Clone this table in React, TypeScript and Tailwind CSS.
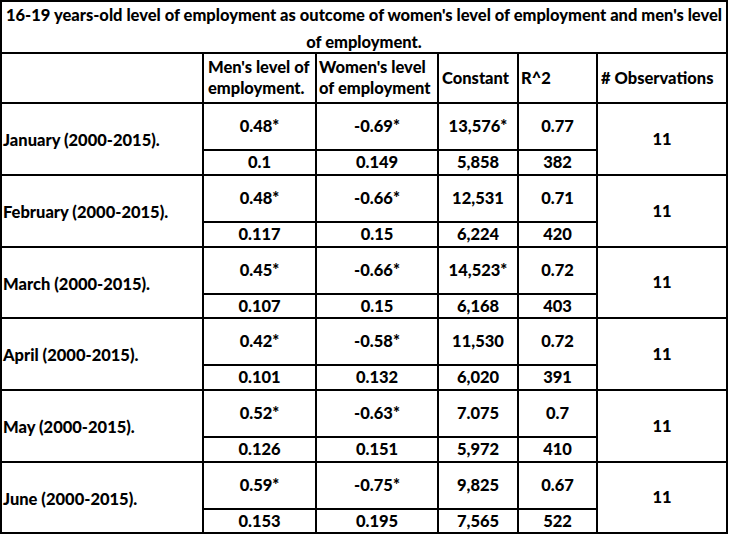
import React from "react";

type Block = { label: string; top: string[]; bottom: string[] };

const blocks: Block[] = [
  { label: "January (2000-2015).", top: ["0.48*", "-0.69*", "13,576*", "0.77"], bottom: ["0.1", "0.149", "5,858", "382"] },
  { label: "February (2000-2015).", top: ["0.48*", "-0.66*", "12,531", "0.71"], bottom: ["0.117", "0.15", "6,224", "420"] },
  { label: "March (2000-2015).", top: ["0.45*", "-0.66*", "14,523*", "0.72"], bottom: ["0.107", "0.15", "6,168", "403"] },
  { label: "April (2000-2015).", top: ["0.42*", "-0.58*", "11,530", "0.72"], bottom: ["0.101", "0.132", "6,020", "391"] },
  { label: "May (2000-2015).", top: ["0.52*", "-0.63*", "7.075", "0.7"], bottom: ["0.126", "0.151", "5,972", "410"] },
  { label: "June (2000-2015).", top: ["0.59*", "-0.75*", "9,825", "0.67"], bottom: ["0.153", "0.195", "7,565", "522"] },
];

const cell = "border-r-2 border-b-2 border-black";

export default function App() {
  return (
    <div className="min-h-[536px] w-[729px] bg-white text-black" style={{ fontFamily: "Lato, 'Liberation Sans', sans-serif" }}>
      <div className="grid w-[728px] grid-cols-[202px_113px_122px_80px_79px_130px] grid-rows-[52px_50px_47px_25px_47px_25px_47px_24px_47px_25px_47px_25px_47px_24px] border-t-2 border-l-2 border-black text-[16.5px] font-black">
        <div className={`${cell} col-span-6 flex flex-col items-center`}>
          <div className="h-[27px] leading-[27px] whitespace-nowrap">16-19 years-old level of employment as outcome of women's level of employment and men's level</div>
          <div className="h-[26px] leading-[26px] whitespace-nowrap">of employment.</div>
        </div>
        <div className={cell}></div>
        <div className={`${cell} flex flex-col justify-center pl-[4px] leading-[21px] whitespace-nowrap`}>
          <div>Men's level of</div>
          <div>employment.</div>
        </div>
        <div className={`${cell} flex flex-col justify-center pl-[2px] leading-[21px] whitespace-nowrap`}>
          <div>Women's level</div>
          <div>of employment</div>
        </div>
        <div className={`${cell} flex items-center pl-[3px]`}>Constant</div>
        <div className={`${cell} flex items-center pl-[2px]`}>R^2</div>
        <div className={`${cell} flex items-center pl-[3px] whitespace-nowrap`}>
          # Observations
        </div>
        {blocks.map((b) => (
          <React.Fragment key={b.label}>
            <div className={`${cell} row-span-2 flex items-center pl-px pt-[3px] whitespace-nowrap`}>{b.label}</div>
            {b.top.map((v, i) => (
              <div key={"t" + i} className={`${cell} flex items-center justify-center`}>{v}</div>
            ))}
            <div className={`${cell} row-span-2 flex items-center justify-center`}>11</div>
            {b.bottom.map((v, i) => (
              <div key={"b" + i} className={`${cell} flex items-center justify-center`}>{v}</div>
            ))}
          </React.Fragment>
        ))}
      </div>
    </div>
  );
}
